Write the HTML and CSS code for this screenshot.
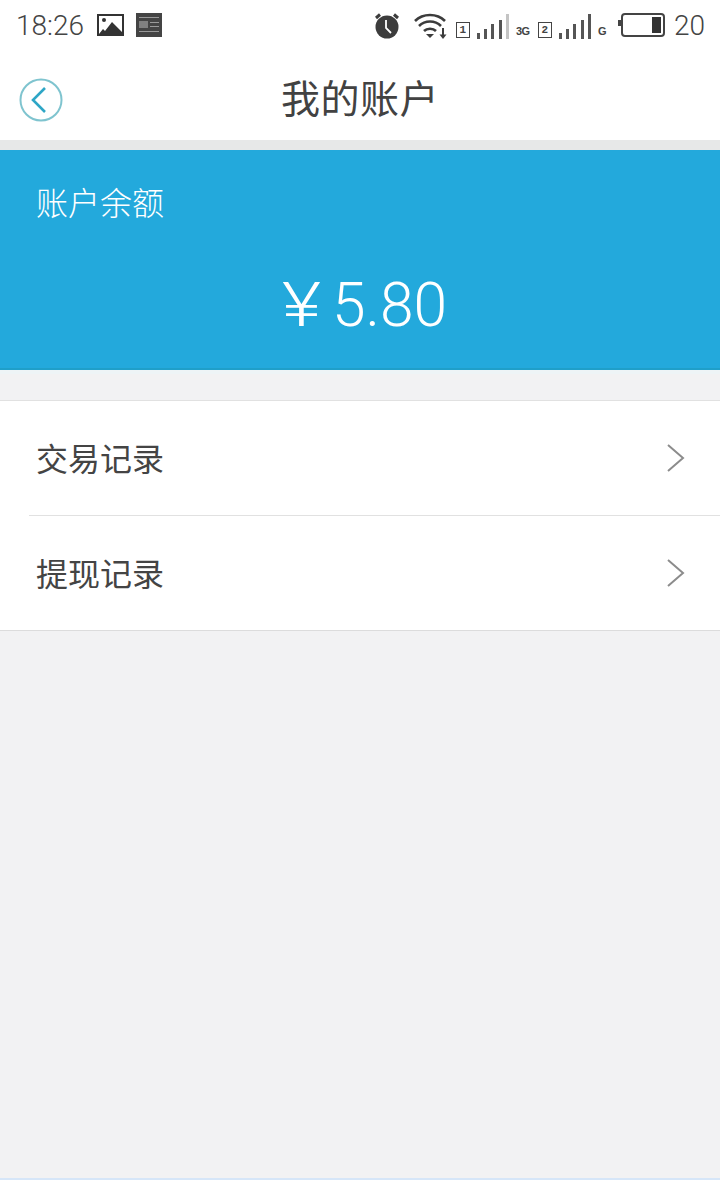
FILE: index.html
```html
<!DOCTYPE html>
<html lang="zh-CN">
<head>
    <meta charset="UTF-8">
    <meta name="viewport" content="width=device-width, initial-scale=1.0">
    <title>我的账户</title>
    <link rel="stylesheet" href="styles.css">
</head>
<body>
    <div class="status-bar">
        <div class="status-left">
            <span class="clock">18:26</span>
            <svg class="pic-icon" width="27" height="22" viewBox="0 0 27 22">
                <rect x="1" y="1" width="25" height="20" fill="#fff" stroke="#333" stroke-width="2"/>
                <path d="M2 20 L6 15 L8 17 L15 8 L25 18 V20 Z" fill="#333"/>
                <circle cx="7" cy="6" r="2" fill="#333"/>
            </svg>
            <svg class="news-icon" width="26" height="24" viewBox="0 0 26 24">
                <rect width="26" height="24" fill="#444"/>
                <rect x="3" y="8" width="9" height="7" fill="#808080"/>
                <path d="M3 4.500H23M14 9.500H23M14 13.500H23M3 18.500H23" stroke="#999" stroke-width="1"/>
            </svg>
        </div>
        <div class="status-right">
            <svg class="alarm-icon" width="26" height="26" viewBox="0 0 26 26">
                <circle cx="13" cy="14" r="11.500" fill="#3c3c3c"/>
                <path d="M2 5 L6 1.500 M24 5 L20 1.500" stroke="#3c3c3c" stroke-width="3"/>
                <path d="M12 7 V15 L17 20" fill="none" stroke="#fff" stroke-width="1.800"/>
            </svg>
            <svg class="wifi-icon" width="34" height="28" viewBox="0 0 34 28">
                <path d="M1 9 C9 1 23 1 31 9 M5 14 C11 8 21 8 27 14 M10 19 C13 16 19 16 22 19" fill="none" stroke="#3c3c3c" stroke-width="2.600"/>
                <path d="M12 22 H20 L16 26 Z" fill="#3c3c3c"/>
                <path d="M29 16 V24" stroke="#3c3c3c" stroke-width="2"/>
                <path d="M25.500 22.500 H32.500 L29 27 Z" fill="#3c3c3c"/>
            </svg>
            <span class="sim sim-one">1</span>
            <div class="signal">
                <i class="b1"></i><i class="b2"></i><i class="b3"></i><i class="b4"></i><i class="b5"></i>
            </div>
            <span class="net">3G</span>
            <span class="sim">2</span>
            <div class="signal dark">
                <i class="b1"></i><i class="b2"></i><i class="b3"></i><i class="b4"></i><i class="b5"></i>
            </div>
            <span class="net net-g">G</span>
            <div class="battery"><div class="battery-level"></div></div>
            <span class="battery-text">20</span>
        </div>
    </div>

    <div class="title-bar">
        <svg class="back-icon" width="44" height="44" viewBox="0 0 44 44">
            <circle cx="22" cy="22" r="20.500" fill="none" stroke="#7fc4cf" stroke-width="2"/>
            <path d="M26 10 L14 22 L26 34" fill="none" stroke="#2ea6c6" stroke-width="2.600"/>
        </svg>
        <h1>我的账户</h1>
    </div>

    <div class="balance-card">
        <div class="balance-label">账户余额</div>
        <div class="balance-amount"><span class="yen">¥</span>5.80</div>
    </div>

    <ul class="menu">
        <li class="menu-item">
            <span class="menu-text">交易记录</span>
            <svg width="20" height="30" viewBox="0 0 20 30"><path d="M2 2 L17 15 L2 28" fill="none" stroke="#8c8c8c" stroke-width="2"/></svg>
        </li>
        <li class="menu-item">
            <span class="menu-text">提现记录</span>
            <svg width="20" height="30" viewBox="0 0 20 30"><path d="M2 2 L17 15 L2 28" fill="none" stroke="#8c8c8c" stroke-width="2"/></svg>
        </li>
    </ul>
</body>
</html>
```

FILE: styles.css
```css
html, body {
    height: 100%;
}
body {
    margin: 0;
    background-color: #f2f2f3;
    border-bottom: 2px solid #d6e6f8;
    box-sizing: border-box;
    font-family: "Noto Sans CJK SC", Roboto, sans-serif;
    overflow: hidden;
}
.status-bar {
    height: 52px;
    padding: 0 15px 0 16px;
    background: white;
    display: flex;
    justify-content: space-between;
    align-items: center;
    color: #444;
}
.status-left, .status-right {
    display: flex;
    align-items: center;
}
.clock {
    font-family: Roboto, sans-serif;
    font-weight: 300;
    font-size: 28px;
    margin-right: 13px;
    margin-top: -2px;
}
.pic-icon {
    margin-right: 12px;
    margin-top: -2px;
}
.news-icon {
    margin-top: -2px;
}
.alarm-icon {
    margin-right: 14px;
}
.wifi-icon {
    margin-right: 8px;
}
.sim {
    width: 12px;
    height: 14px;
    border: 1.500px solid #444;
    font: bold 11px/14px "Liberation Mono", monospace;
    text-align: center;
    margin-top: 8px;
    margin-right: 7px;
}
.sim-one {
    margin-right: 7px;
}
.signal {
    display: flex;
    align-items: flex-end;
    gap: 4.250px;
    height: 25px;
    margin-right: 7px;
}
.signal i {
    display: block;
    width: 3px;
    background: #555;
}
.signal .b1 { height: 6px; }
.signal .b2 { height: 10px; }
.signal .b3 { height: 15px; }
.signal .b4 { height: 19px; }
.signal .b5 { height: 25px; background: #c4c4c4; }
.signal.dark .b5 { background: #555; }
.net {
    font: bold 11px "Liberation Sans", sans-serif;
    letter-spacing: -0.5px;
    width: 14px;
    margin-top: 10px;
    margin-right: 8px;
}
.net-g {
    width: auto;
    margin-right: 15px;
}
.battery {
    position: relative;
    width: 36px;
    height: 16px;
    border: 2px solid #444;
    border-radius: 4px;
    margin-right: 9px;
    display: flex;
    justify-content: flex-end;
    padding: 2px;
    margin-top: -2px;
}
.battery::before {
    content: "";
    position: absolute;
    left: -5px;
    top: 5px;
    width: 3px;
    height: 6px;
    background: #444;
}
.battery-level {
    width: 9px;
    background: #333;
}
.battery-text {
    font-family: Roboto, sans-serif;
    font-weight: 300;
    font-size: 28px;
    margin-top: -2px;
}
.title-bar {
    height: 88px;
    background: white;
    display: flex;
    align-items: center;
    justify-content: center;
    position: relative;
}
.back-icon {
    position: absolute;
    left: 19px;
    top: 26px;
}
h1 {
    margin: 0;
    font-size: 39px;
    letter-spacing: 0.5px;
    font-weight: 400;
    color: #424242;
}
.balance-card {
    margin-top: 10px;
    height: 220px;
    box-sizing: border-box;
    background-color: #23a9dc;
    border-bottom: 2px solid #1f9fc9;
    color: white;
    box-shadow: 0 -10px 0 #e7e8e8, 0 4px 0 #eef4f6;
}
.balance-label {
    font-size: 32px;
    font-weight: 300;
    padding: 28px 36px 0;
    line-height: 46px;
}
.balance-amount {
    margin-top: 46px;
    padding-left: 8px;
    display: flex;
    justify-content: center;
    align-items: center;
    font-family: Roboto, sans-serif;
    font-weight: 300;
    font-size: 60.500px;
    line-height: 72px;
}
.yen {
    width: 41px;
    margin-right: 10px;
    text-align: center;
    transform: scaleX(1.250);
}
.menu {
    list-style: none;
    margin: 30px 0 0;
    padding: 0;
    background: white;
    border-top: 1px solid #e1e1e1;
    border-bottom: 1px solid #dcdcdc;
}
.menu-item {
    height: 114px;
    margin-left: 29px;
    padding: 0 34px 0 7px;
    display: flex;
    justify-content: space-between;
    align-items: center;
    font-size: 32px;
    color: #444;
}
.menu-item + .menu-item {
    border-top: 1px solid #e1e1e1;
}
.menu-text {
    margin-top: -2px;
}
```
